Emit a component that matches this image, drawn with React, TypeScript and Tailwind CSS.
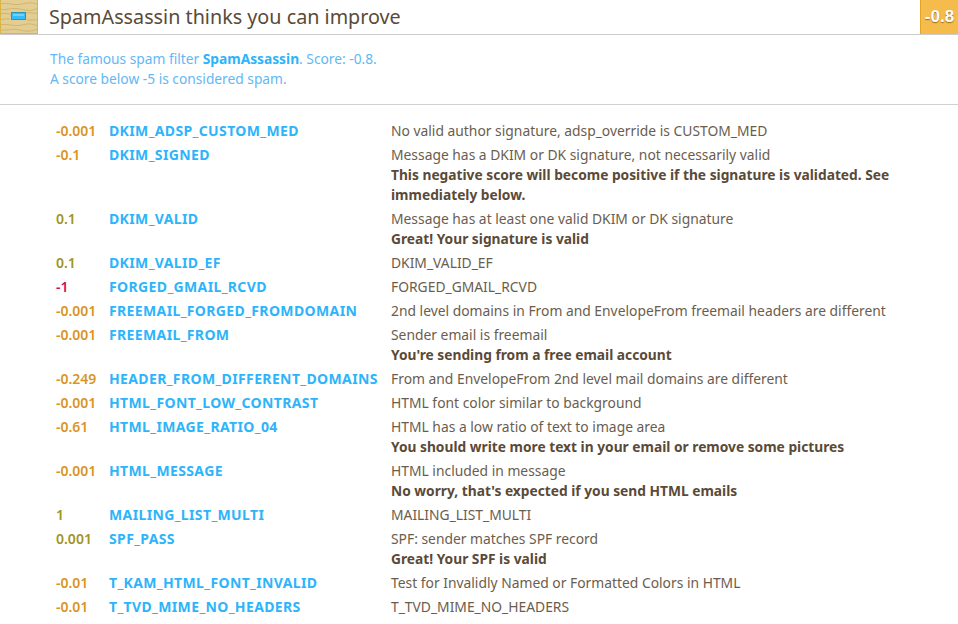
import React from "react";

type Row = { score: string; tone: string; name: string; desc: string; note?: string };

const rows: Row[] = [
  { score: "-0.001", tone: "text-[#da951f]", name: "DKIM_ADSP_CUSTOM_MED", desc: "No valid author signature, adsp_override is CUSTOM_MED" },
  { score: "-0.1", tone: "text-[#da951f]", name: "DKIM_SIGNED", desc: "Message has a DKIM or DK signature, not necessarily valid", note: "This negative score will become positive if the signature is validated. See immediately below." },
  { score: "0.1", tone: "text-[#a3931f]", name: "DKIM_VALID", desc: "Message has at least one valid DKIM or DK signature", note: "Great! Your signature is valid" },
  { score: "0.1", tone: "text-[#a3931f]", name: "DKIM_VALID_EF", desc: "DKIM_VALID_EF" },
  { score: "-1", tone: "text-[#d3104f]", name: "FORGED_GMAIL_RCVD", desc: "FORGED_GMAIL_RCVD" },
  { score: "-0.001", tone: "text-[#da951f]", name: "FREEMAIL_FORGED_FROMDOMAIN", desc: "2nd level domains in From and EnvelopeFrom freemail headers are different" },
  { score: "-0.001", tone: "text-[#da951f]", name: "FREEMAIL_FROM", desc: "Sender email is freemail", note: "You're sending from a free email account" },
  { score: "-0.249", tone: "text-[#da951f]", name: "HEADER_FROM_DIFFERENT_DOMAINS", desc: "From and EnvelopeFrom 2nd level mail domains are different" },
  { score: "-0.001", tone: "text-[#da951f]", name: "HTML_FONT_LOW_CONTRAST", desc: "HTML font color similar to background" },
  { score: "-0.61", tone: "text-[#da951f]", name: "HTML_IMAGE_RATIO_04", desc: "HTML has a low ratio of text to image area", note: "You should write more text in your email or remove some pictures" },
  { score: "-0.001", tone: "text-[#da951f]", name: "HTML_MESSAGE", desc: "HTML included in message", note: "No worry, that's expected if you send HTML emails" },
  { score: "1", tone: "text-[#a3931f]", name: "MAILING_LIST_MULTI", desc: "MAILING_LIST_MULTI" },
  { score: "0.001", tone: "text-[#a3931f]", name: "SPF_PASS", desc: "SPF: sender matches SPF record", note: "Great! Your SPF is valid" },
  { score: "-0.01", tone: "text-[#da951f]", name: "T_KAM_HTML_FONT_INVALID", desc: "Test for Invalidly Named or Formatted Colors in HTML" },
  { score: "-0.01", tone: "text-[#da951f]", name: "T_TVD_MIME_NO_HEADERS", desc: "T_TVD_MIME_NO_HEADERS" },
];

function WoodIcon() {
  return (
    <svg width="38" height="34" viewBox="0 0 38 34" className="block">
      <rect width="38" height="34" fill="#e3cd92" />
      <g fill="none" stroke="#cfb570" strokeWidth="1">
        <path d="M0 4c8-2 14 2 22 0s10-1 16 0" />
        <path d="M0 9c6 2 12-2 20 0s12 2 18-1" />
        <path d="M0 14c6-2 10 1 12 0M26 13c4-1 8 1 12 0" />
        <path d="M0 19c4 1 8-1 10 0M27 20c4 1 8-1 11 0" />
        <path d="M0 25c8-2 14 2 22 0s10-1 16 1" />
        <path d="M0 30c6 1 12-2 20 0s12 1 18-1" />
      </g>
      <path d="M.5 0v33.5h37V0" fill="none" stroke="#d8b545" />
      <rect x="11.5" y="12.5" width="14" height="7" fill="#35bdfb" stroke="#2f93b8" />
      <rect x="13" y="14" width="11" height="2" fill="#6fd2fc" />
    </svg>
  );
}

export default function App() {
  return (
    <div className="h-[624px] w-[958px] overflow-hidden bg-white font-['Noto_Sans',sans-serif] text-[13.85px] leading-5 text-[#6b5d4e]">
      {/* Title bar */}
      <div className="flex h-[35px] items-stretch border-b border-[#cccccc]">
        <WoodIcon />
        <h1 className="ml-[11px] flex-1 text-[19.75px] leading-[33px] text-[#5a4a38]">SpamAssassin thinks you can improve</h1>
        <div className="flex w-[38px] items-center justify-center border-l border-[#e5a32c] bg-[#f5bb4b] font-['Liberation_Sans',sans-serif] text-[17px] font-bold text-white [text-shadow:0_1px_1px_rgba(90,60,0,0.6)]">
          -0.8
        </div>
      </div>

      {/* Intro */}
      <div className="border-b border-[#d0d0d0] pt-[14px] pb-[15px] pl-[50px] text-[13.75px] text-[#62b8f6]">
        <p>
          The famous spam filter <b className="text-[#2db4fb]">SpamAssassin</b>. Score: -0.8.
        </p>
        <p>A score below -5 is considered spam.</p>
      </div>

      {/* Rules */}
      <table className="mt-[14px] ml-[50px] w-[850px] table-fixed border-collapse">
        <colgroup>
          <col className="w-[59px]" />
          <col className="w-[282px]" />
          <col />
        </colgroup>
        <tbody>
          {rows.map((row) => (
            <tr key={row.name} className="align-top">
              <td className={`py-[2px] pl-[6px] text-[14px] font-semibold ${row.tone}`}>{row.score}</td>
              <td className="py-[2px] text-[14px] font-bold tracking-[0.37px] whitespace-nowrap text-[#2db4fb]">{row.name}</td>
              <td className="py-[2px]">
                {row.desc}
                {row.note && <div className="text-[13.75px] font-bold text-[#5a4a38]">{row.note}</div>}
              </td>
            </tr>
          ))}
        </tbody>
      </table>
    </div>
  );
}
